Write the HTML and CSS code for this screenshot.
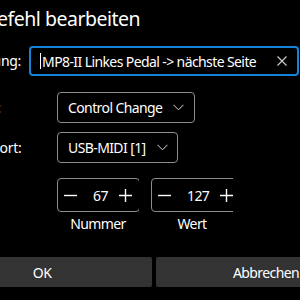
FILE: index.html
```html
<!DOCTYPE html>
<html lang="de">
<head>
<meta charset="utf-8">
<link rel="stylesheet" href="styles.css">
</head>
<body>
<div class="dialog">
  <h1 class="title">MIDI-Befehl bearbeiten</h1>
  <div class="name-row">
    <span class="label">Bezeichnung:</span>
    <div class="textbox">
      <span class="caret"></span>
      <span class="value">MP8-II Linkes Pedal -&gt; nächste Seite</span>
      <svg class="clear" width="10" height="10" viewBox="0 0 10 10"><path d="M0.5 0.5 L9.5 9.5 M9.5 0.5 L0.5 9.5" stroke="#d0d0d0" stroke-width="1.1" fill="none"/></svg>
    </div>
  </div>
  <div class="form">
    <span class="label label-tight">Befehlsart:</span>
    <div class="combo combo-type">
      <span>Control Change</span>
      <svg class="chevron" width="11" height="7" viewBox="0 0 11 7"><path d="M0.5 0.8 L5.5 5.8 L10.5 0.8" stroke="#d8d8d8" stroke-width="1" fill="none"/></svg>
    </div>
    <span class="label">Ausgabeport:</span>
    <div class="combo combo-port">
      <span>USB-MIDI [1]</span>
      <svg class="chevron" width="11" height="7" viewBox="0 0 11 7"><path d="M0.5 0.8 L5.5 5.8 L10.5 0.8" stroke="#d8d8d8" stroke-width="1" fill="none"/></svg>
    </div>
    <span></span>
    <div class="numbers">
      <div class="numcol">
        <div class="numbox">
          <svg class="minus" width="13" height="13" viewBox="0 0 13 13"><path d="M0 6.5 H13" stroke="#fff" stroke-width="1.4"/></svg>
          <span class="num">67</span>
          <svg class="plus" width="13" height="13" viewBox="0 0 13 13"><path d="M0 6.5 H13 M6.5 0 V13" stroke="#fff" stroke-width="1.4"/></svg>
        </div>
        <div class="numlabel">Nummer</div>
      </div>
      <div class="numcol">
        <div class="numbox">
          <svg class="minus" width="13" height="13" viewBox="0 0 13 13"><path d="M0 6.5 H13" stroke="#fff" stroke-width="1.4"/></svg>
          <span class="num">127</span>
          <svg class="plus" width="13" height="13" viewBox="0 0 13 13"><path d="M0 6.5 H13 M6.5 0 V13" stroke="#fff" stroke-width="1.4"/></svg>
        </div>
        <div class="numlabel">Wert</div>
      </div>
    </div>
  </div>
  <div class="buttons">
    <button class="btn">OK</button>
    <button class="btn">Abbrechen</button>
  </div>
</div>
</body>
</html>
```

FILE: styles.css
```css
html, body {
  margin: 0;
  padding: 0;
  background: #000;
  width: 300px;
  height: 300px;
  overflow: hidden;
}

body {
  font-family: "Noto Sans", "Open Sans", sans-serif;
  color: #fff;
  font-size: 14px;
  letter-spacing: -0.6px;
}

.dialog {
  margin-left: -68px;
  width: 444px;
  display: flex;
  flex-direction: column;
}

.title {
  margin: 0;
  padding: 5px 0 0 4px;
  font-size: 19.5px;
  font-weight: 400;
  line-height: 28px;
  height: 41px;
  box-sizing: border-box;
  letter-spacing: -0.5px;
}

.name-row {
  display: flex;
  align-items: center;
  padding-left: 4px;
  margin-top: 5px;
}

.label {
  line-height: 20px;
  white-space: nowrap;
  letter-spacing: -0.3px;
}

.label-tight {
  letter-spacing: -0.6px;
}

.textbox {
  margin-left: 8px;
  width: 270px;
  height: 30px;
  box-sizing: border-box;
  border: 2px solid #1783d8;
  border-radius: 4px;
  display: flex;
  align-items: center;
  padding: 0 10px 0 9px;
  flex: none;
}

.caret {
  width: 1px;
  height: 16px;
  background: #fff;
  margin-right: 1px;
}

.value {
  white-space: nowrap;
}

.clear {
  margin-left: auto;
}

.form {
  display: grid;
  grid-template-columns: 121px auto;
  align-items: center;
  justify-items: start;
  padding-left: 4px;
  margin-top: 16px;
  row-gap: 9px;
}

.combo {
  height: 31px;
  box-sizing: border-box;
  border: 1px solid #8c8c8c;
  border-radius: 4px;
  display: flex;
  align-items: center;
  gap: 11px;
  padding: 0 9px 0 10px;
  white-space: nowrap;
}

.combo-type {
  padding-right: 10px;
}

.numbers {
  display: flex;
  gap: 12px;
  margin-top: 6px;
}

.numcol {
  width: 82px;
  overflow: hidden;
  display: flex;
  flex-direction: column;
  align-items: stretch;
}

.numbox {
  height: 34px;
  box-sizing: border-box;
  border: 1px solid #8c8c8c;
  border-radius: 4px;
  display: flex;
  align-items: center;
  padding: 0 7px 0 6px;
  align-self: flex-start;
}

.num {
  margin: 0 11px 0 16px;
}

.numlabel {
  text-align: center;
  line-height: 20px;
  margin-top: 2px;
}

.buttons {
  display: grid;
  grid-template-columns: 220px 220px;
  gap: 4px;
  margin-top: 23px;
}

.btn {
  height: 30px;
  background: #333;
  color: #fff;
  border: none;
  border-radius: 2px;
  font-family: inherit;
  font-size: 14px;
  letter-spacing: -0.6px;
  padding: 0;
}
```
